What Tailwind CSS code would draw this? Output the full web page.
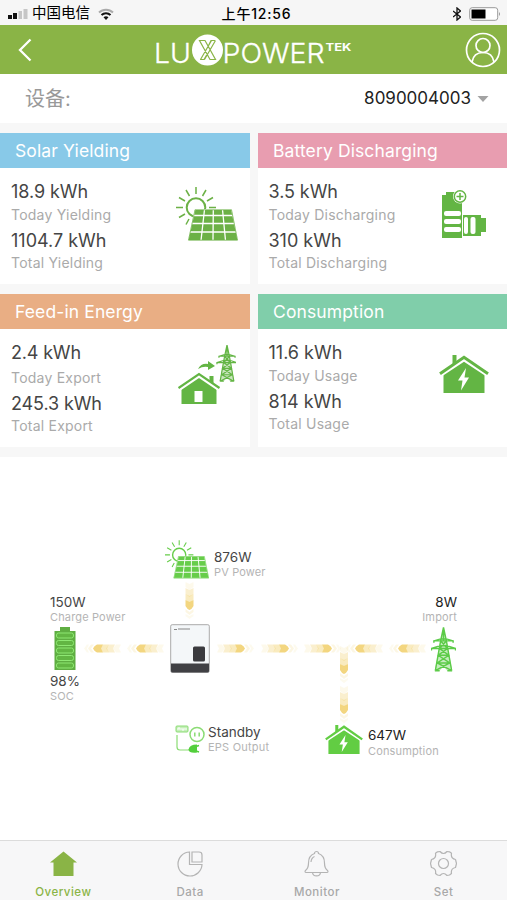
<!DOCTYPE html>
<html lang="zh">
  <head>
    <meta charset="UTF-8" />
    <meta name="viewport" content="width=device-width, initial-scale=1.0" />
    <title>LuxPower — Overview</title>
    <script src="https://cdn.jsdelivr.net/npm/@tailwindcss/browser@4"></script>
  </head>
  <body class="w-[507px] h-[900px] overflow-hidden flex flex-col bg-white font-['Inter','Noto_Sans_CJK_SC',sans-serif] text-[#454545]">
    <!-- Shared icons -->
    <svg class="hidden">
      <symbol id="solar" viewBox="0 0 62 54">
        <g fill="none" stroke="currentColor">
          <circle cx="20" cy="20.5" r="9.3" stroke-width="2" />
          <path stroke-width="1.5" d="M20 0v7M10 3l3.500 6M30 3l-3.500 6M3 10.500l6 3.500M37 10.500l-6 3.500M0 20.500h7M33 20.500h7M3 30.500l6-3.500M10 37.500l3-5.500" />
        </g>
        <path d="M19 22.500h36.500L62 53.500H12z" fill="currentColor" stroke="#fff" stroke-width="1" />
        <path d="M28.500 22.500L25 53.500M37.300 22.500L37 53.500M46.500 22.500L49.500 53.500M18 28.500h39M16 36.500h43M14 45h46" fill="none" stroke="#fff" stroke-width="1.300" />
        <path d="M19 22.800h36.500L61.500 53.200H12.500z" fill="none" stroke="currentColor" stroke-width=".8" />
      </symbol>
      <symbol id="house-bolt" viewBox="0 0 50 38">
        <path d="M4.500 18.500L25 5.500l20.500 13V38h-41z" fill="currentColor" />
        <path d="M1.500 19L25 3.500 48.500 19" fill="none" stroke="#fff" stroke-width="5.500" />
        <path d="M13.500 9V0h4v6.500z" fill="currentColor" />
        <path d="M1 18.800L25 2.200l24 16.600" fill="none" stroke="currentColor" stroke-width="3" />
        <path d="M27 13l-8 12.500h4.500L22 35.500l8-13h-4.500z" fill="#fff" />
      </symbol>
      <symbol id="tower" viewBox="0 0 26 46">
        <path d="M13 0L10 13 4 45h5l4-4 4 4h5L16 13z" fill="currentColor" opacity=".35" />
        <path fill="none" stroke="currentColor" stroke-width="1.500" d="M13 0L10 14 4.500 45M13 0l3 14 5.500 31M3 16v-2h20v2M.5 24v-2h25v2M3 14l7-2h6l7 2M.5 22l9-3h7l9 3M10 14l7 8-9.500 7 12 8L4.500 45M16 14l-7 8 9.500 7-12 8 15 8M7.500 29h11M6 37h14M4 45h5M17 45h5M13 2v12" />
      </symbol>
      <!-- Energy flow dash, pointing right -->
      <symbol id="flow" viewBox="0 0 38 10">
        <g fill="#f2d272">
          <path opacity=".14" d="M0 1h5l3 4-3 4H0l2-4z" />
          <path opacity=".35" d="M6 1h6l3 4-3 4H6l2-4z" />
          <path opacity=".45" d="M12 1h6l3 4-3 4h-6l2-4z" />
          <path opacity=".9" d="M18 1h6q3 1.500 4 4-1 2.500-4 4h-6l2-4z" />
          <path opacity=".2" d="M27 1h3l3 4-3 4h-3l3-4z" />
          <path opacity=".12" d="M32 1h2l3 4-3 4h-2l2-4z" />
        </g>
      </symbol>
    </svg>

    <!-- Status bar -->
    <div class="h-[25px] shrink-0 bg-[#f6f6f6] flex items-center justify-between pt-0.5 pl-2 pr-1.5 text-black">
      <div class="w-[200px] flex items-center">
        <svg class="w-5 h-3" viewBox="0 0 20 12">
          <path d="M0 7h4v4H0zM5 5h4v6H5z" fill="#111" />
          <path d="M10.500 3h3.500v8h-3.500zM15.500 1h4v10h-4z" fill="#c6c6c6" />
        </svg>
        <span class="ml-1 text-[14.500px] leading-none">中国电信</span>
        <svg class="ml-2 w-4 h-3" viewBox="0 0 16 12" fill="none" stroke-width="2">
          <path d="M1 4.500a10 10 0 0 1 14 0" stroke="#aaa" />
          <path d="M3.500 7a6.500 6.500 0 0 1 9 0" stroke="#111" />
          <path d="M5.500 9.200a4 4 0 0 1 5 0L8 12z" fill="#111" />
        </svg>
      </div>
      <span class="pl-1 text-[14px] leading-none font-medium tracking-[0.800px]">上午12:56</span>
      <div class="w-[200px] flex items-center justify-end gap-2">
        <svg class="w-2 h-3.5" viewBox="0 0 8 14" fill="none" stroke="#111" stroke-width="1.300">
          <path d="M0 4l7.500 6L4 13V1l3.500 3L0 10" />
        </svg>
        <svg class="w-8 h-3.5" viewBox="0 0 32 14">
          <rect x=".7" y=".7" width="28" height="12.600" rx="2.500" fill="#fff" stroke="#999" />
          <path d="M2.500 2.500h14v9h-14z" fill="#000" />
          <path d="M30 5q2 2 0 4z" fill="#999" />
        </svg>
      </div>
    </div>

    <!-- Header -->
    <header class="h-[49px] shrink-0 bg-[#8ab446] flex items-center justify-between pl-[18px] pr-[6px] text-white">
      <svg class="w-[24px] h-6" viewBox="0 0 24 24" fill="none" stroke="currentColor" stroke-width="2.300">
        <path d="M12.500 1.500L2 12l10.500 10.500" />
      </svg>
      <svg class="w-[198px] h-9" viewBox="0 0 198 36" fill="currentColor" font-family="Inter">
        <text x="-1" y="30.500" font-size="27.500" font-weight="300" stroke="currentColor" stroke-width=".3" textLength="37" lengthAdjust="spacingAndGlyphs">LU</text>
        <circle cx="52.500" cy="18" r="15.500" />
        <g fill="none" stroke="#8ab446" stroke-width="1.200">
          <path d="M44.500 8.500h5.500l10.500 19h-5.500zM60 8.500h-4l-3 6M45 27.500h4l3.500-6M56.500 8.500l-11 19M60.500 8.500L49.500 27.500" />
        </g>
        <text x="67.500" y="30.500" font-size="27.500" font-weight="300" stroke="currentColor" stroke-width=".3" textLength="102" lengthAdjust="spacingAndGlyphs">POWER</text>
        <text x="170.500" y="18.500" font-size="10.500" font-weight="700" textLength="26" lengthAdjust="spacingAndGlyphs">TEK</text>
      </svg>
      <svg class="w-9 h-9" viewBox="0 0 36 36" fill="none" stroke="currentColor" stroke-width="1.700">
        <circle cx="18" cy="18" r="16.500" />
        <circle cx="18" cy="13.500" r="7" />
        <path d="M7 30c1-6 5-9.500 11-9.500S28 24 29 30" />
      </svg>
    </header>

    <!-- Device selector -->
    <div class="h-[49px] shrink-0 flex items-center justify-between pl-[25px] pr-[18px]">
      <span class="text-[20px] leading-none text-[#999]">设备:</span>
      <div class="flex items-center gap-1.5">
        <span class="text-[17px] leading-none text-[#222]">8090004003</span>
        <svg class="w-3 h-2" viewBox="0 0 12 8"><path d="M.5 1h11L6 7z" fill="#a3a3a3" /></svg>
      </div>
    </div>

    <!-- Energy cards -->
    <main class="shrink-0 h-[334px] bg-[#f7f7f7] pt-2.5 grid grid-cols-[250px_249px] grid-rows-[151px_153px] gap-x-2 gap-y-[10px]">
      <section class="bg-white flex flex-col">
        <h2 class="h-[35px] bg-[#88c9e8] pt-0.5 pl-[15px] flex items-center text-[17.500px] text-white tracking-[0.120px]">Solar Yielding</h2>
        <div class="flex justify-between pl-[11px] pr-3 pt-3">
          <div>
            <p class="h-6 leading-6 text-[18px] tracking-[-0.080px]">18.9 kWh</p>
            <p class="mt-px h-5 leading-5 text-[14px] text-[#aaa] tracking-[0.220px]">Today Yielding</p>
            <p class="mt-1 h-6 leading-6 text-[18px]">1104.7 kWh</p>
            <p class="h-5 leading-5 text-[14px] text-[#aaa] tracking-[0.220px]">Total Yielding</p>
          </div>
          <svg class="mt-[7px] w-[62px] h-[54px] text-[#6cb146]"><use href="#solar" /></svg>
        </div>
      </section>

      <section class="bg-white flex flex-col">
        <h2 class="h-[35px] bg-[#e89db0] pt-0.5 pl-[15px] flex items-center text-[17.500px] text-white tracking-[0.120px]">Battery Discharging</h2>
        <div class="flex justify-between pl-[10.500px] pr-5 pt-3">
          <div>
            <p class="h-6 leading-6 text-[18px] tracking-[-0.080px]">3.5 kWh</p>
            <p class="mt-px h-5 leading-5 text-[14px] text-[#aaa] tracking-[0.220px]">Today Discharging</p>
            <p class="mt-1 h-6 leading-6 text-[18px]">310 kWh</p>
            <p class="h-5 leading-5 text-[14px] text-[#aaa] tracking-[0.220px]">Total Discharging</p>
          </div>
          <svg class="mt-[9px] w-[46px] h-[50px]" viewBox="0 -2 46 50">
            <path d="M1 4h4V1h11v3h5v43H1z" fill="#63b544" />
            <path d="M22 24h18v3h5v14h-5v4H22z" fill="#63b544" />
            <path d="M21.500 24v22" stroke="#fff" stroke-width=".8" />
            <circle cx="19" cy="5.500" r="7" fill="#fff" />
            <circle cx="19" cy="5.500" r="5.700" fill="#fff" stroke="#63b544" stroke-width="1.500" />
            <path d="M19 2v7M15.500 5.500h7" stroke="#63b544" stroke-width="1.500" />
            <g fill="#fff">
              <rect x="3" y="20" width="17" height="5" rx="2" />
              <rect x="3" y="28" width="17" height="5" rx="2" />
              <rect x="3" y="36" width="17" height="5" rx="2" />
              <rect x="23" y="26" width="4" height="17" rx="2" />
              <rect x="29.500" y="26" width="5" height="17" rx="2" />
            </g>
          </svg>
        </div>
      </section>

      <section class="bg-white flex flex-col">
        <h2 class="h-[35px] bg-[#e9ae84] pt-0.5 pl-[15px] flex items-center text-[17.500px] text-white tracking-[0.120px]">Feed-in Energy</h2>
        <div class="flex justify-between pl-[11px] pr-[14px] pt-3">
          <div>
            <p class="h-6 leading-6 text-[18px] tracking-[-0.180px]">2.4 kWh</p>
            <p class="mt-[3px] h-5 leading-5 text-[14px] text-[#aaa] tracking-[0.220px]">Today Export</p>
            <p class="mt-1 h-6 leading-6 text-[18px] tracking-[-0.120px]">245.3 kWh</p>
            <p class="h-5 leading-5 text-[14px] text-[#aaa] tracking-[0.220px]">Total Export</p>
          </div>
          <svg class="mt-1 w-[58px] h-[60px] text-[#63b544]" viewBox="0 0 58 60">
            <use href="#tower" x="38" y="0" width="22" height="37" />
            <path d="M20 24q3-6 10-5v-3l7 5-7 4v-3q-5-1-10 2z" fill="currentColor" />
            <path d="M3.500 44L21 31.500 38.500 44v15h-35z" fill="currentColor" />
            <path d="M1 44L21 30.500 41 44" fill="none" stroke="#fff" stroke-width="4" />
            <path d="M31.500 31h4v8l-4-3z" fill="currentColor" />
            <path d="M.5 43L21 29l20.500 14" fill="none" stroke="currentColor" stroke-width="2.200" />
            <path d="M16.500 46h8v11h-8z" fill="#fff" />
          </svg>
        </div>
      </section>

      <section class="bg-white flex flex-col">
        <h2 class="h-[35px] bg-[#80ceaa] pt-0.5 pl-[15px] flex items-center text-[17.500px] text-white tracking-[0.120px]">Consumption</h2>
        <div class="flex justify-between pl-[10.500px] pr-[18px] pt-3">
          <div>
            <p class="h-6 leading-6 text-[18px]">11.6 kWh</p>
            <p class="mt-px h-5 leading-5 text-[14px] text-[#aaa] tracking-[0.220px]">Today Usage</p>
            <p class="mt-1 h-6 leading-6 text-[18px]">814 kWh</p>
            <p class="h-5 leading-5 text-[14px] text-[#aaa] tracking-[0.220px]">Total Usage</p>
          </div>
          <svg class="mt-[14px] w-[50px] h-[38px] text-[#63b544]"><use href="#house-bolt" /></svg>
        </div>
      </section>
    </main>

    <!-- Energy flow diagram -->
    <div class="relative h-[383px] shrink-0">
      <!-- Flow lines -->
      <svg class="absolute inset-0 w-[507px] h-[383px]" viewBox="0 457 507 383">
        <use href="#flow" width="38" height="10" transform="translate(121 653.500) rotate(180)" />
        <use href="#flow" width="38" height="10" transform="translate(164 653.500) rotate(180)" />
        <use href="#flow" width="38" height="10" transform="translate(217 643.500)" />
        <use href="#flow" width="38" height="10" transform="translate(261 643.500)" />
        <use href="#flow" width="38" height="10" transform="translate(304 643.500)" />
        <use href="#flow" width="38" height="10" transform="translate(383 653.500) rotate(180)" />
        <use href="#flow" width="38" height="10" transform="translate(426 653.500) rotate(180)" />
        <use href="#flow" width="38" height="10" transform="translate(194.500 582) rotate(90)" />
        <use href="#flow" width="38" height="10" transform="translate(349 646) rotate(90)" />
        <use href="#flow" width="38" height="10" transform="translate(349 686) rotate(90)" />
      </svg>

      <!-- PV -->
      <svg class="absolute left-[165px] top-[83px] w-[44px] h-[39px] text-[#67cd4a]"><use href="#solar" /></svg>
      <div class="absolute left-[214px] top-[93px] whitespace-nowrap">
        <p class="text-[13.500px] leading-[15px]">876W</p>
        <p class="text-[11px] leading-[15px] text-[#b4b4b4] tracking-[0.150px]">PV Power</p>
      </div>

      <!-- Battery -->
      <div class="absolute left-[50px] top-[138px] whitespace-nowrap">
        <p class="text-[13.500px] leading-[15px]">150W</p>
        <p class="text-[11px] leading-[15px] text-[#b4b4b4] tracking-[0.150px]">Charge Power</p>
        <svg class="mt-[2px] ml-1 w-[22px] h-[43px]" viewBox="0 0 22 43">
          <path d="M6 0h10v4h5.500v39H.5V4H6z" fill="#5fae42" />
          <g fill="#62b643" stroke="#8ee873" stroke-width="1">
            <rect x="2.500" y="6" width="17" height="5" rx="2" />
            <rect x="2.500" y="13.500" width="17" height="5" rx="2" />
            <rect x="2.500" y="21" width="17" height="5" rx="2" />
            <rect x="2.500" y="28.500" width="17" height="5" rx="2" />
            <rect x="2.500" y="36" width="17" height="5" rx="2" />
          </g>
        </svg>
        <p class="mt-[4px] text-[13.500px] leading-[15px]">98%</p>
        <p class="text-[11px] leading-[15px] text-[#b4b4b4] tracking-[0.150px]">SOC</p>
      </div>

      <!-- Inverter -->
      <svg class="absolute left-[170px] top-[167px] w-[40px] h-[49px]" viewBox="0 0 40 49">
        <rect x=".7" y=".7" width="38.600" height="47.600" rx="1.500" fill="#f4f7f9" stroke="#aaa" />
        <path d="M1 39.500h38V47q0 1.500-1.500 1.500h-35Q1 48.500 1 47z" fill="#404044" />
        <rect x="23" y="22.500" width="12" height="15" rx="1.500" fill="#3b3b3f" />
        <path d="M4 5.500h3M8 5h12" stroke="#888" stroke-width="1.200" />
      </svg>

      <!-- Grid -->
      <div class="absolute right-[50px] top-[138px] whitespace-nowrap text-right">
        <p class="text-[13.500px] leading-[15px] text-[#222]">8W</p>
        <p class="text-[11px] leading-[15px] text-[#b4b4b4] tracking-[0.150px]">Import</p>
      </div>
      <svg class="absolute left-[431px] top-[170px] w-[25px] h-[45px] text-[#5ccb48]"><use href="#tower" /></svg>

      <!-- EPS -->
      <svg class="absolute left-[175px] top-[268px] w-[31px] h-[29px]" viewBox="0 0 31 29" fill="none" stroke="#8bdc74">
        <rect x="1" y="1" width="12" height="6" rx="1" fill="#c5efb9" />
        <path d="M3 5V3h2v2M7 3v2h2V3M11 3v2" stroke="#fff" />
        <path d="M2 10v12q0 3 3 3h9" stroke-width="1.200" />
        <circle cx="22" cy="9.500" r="7" stroke-width="1.500" />
        <path d="M19.800 7.500v4M24.200 7.500v4" stroke-width="1.500" />
        <path d="M22 19.500v8q-8 1-8.500-3 1-5 8.500-5z" fill="#53cf3c" stroke="none" />
        <path d="M21 21.500l3-1M21 26l3 1" stroke="#53cf3c" stroke-width="1.500" />
      </svg>
      <div class="absolute left-[208px] top-[268px] whitespace-nowrap">
        <p class="text-[13.500px] leading-[15px]">Standby</p>
        <p class="text-[11px] leading-[15px] text-[#b4b4b4] tracking-[0.220px]">EPS Output</p>
      </div>

      <!-- Consumption -->
      <svg class="absolute left-[325px] top-[268px] w-[38px] h-[29px] text-[#62cd43]"><use href="#house-bolt" /></svg>
      <div class="absolute left-[368px] top-[271px] whitespace-nowrap">
        <p class="text-[13.500px] leading-[15px] text-[#222]">647W</p>
        <p class="text-[11px] leading-4 text-[#b4b4b4] tracking-[0.150px]">Consumption</p>
      </div>
    </div>

    <!-- Bottom navigation -->
    <nav class="h-[60px] shrink-0 bg-[#f7f7f8] border-t border-[#dcdcdc] grid grid-cols-4 text-[11.500px] font-medium text-[#a8a8a8] tracking-[0.500px]">
      <a href="#" class="flex flex-col items-center pt-[9px] text-[#8ab446]">
        <svg class="w-[27px] h-[27px]" viewBox="0 0 27 27" fill="currentColor">
          <path d="M13.500 1.500L27 12.500h-3.500V26h-20V12.500H0z" />
        </svg>
        <span class="mt-[7px] leading-4">Overview</span>
      </a>
      <a href="#" class="flex flex-col items-center pt-[9px]">
        <svg class="w-[27px] h-[27px]" viewBox="0 0 27 27" fill="none" stroke="#b4b4b4" stroke-width="1.200">
          <path d="M12.500 2a12 12 0 1 0 12.500 12.500H12.500z" />
          <path d="M15 2v10H25V5q0-3-3-3z" />
        </svg>
        <span class="mt-[7px] leading-4">Data</span>
      </a>
      <a href="#" class="flex flex-col items-center pt-[9px]">
        <svg class="w-[27px] h-[27px]" viewBox="0 0 27 27" fill="none" stroke="#b4b4b4" stroke-width="1.200">
          <path d="M11.500 3.500a2 2 0 0 1 4 0C20 5 21.500 8.500 21.500 13c0 4.500 1 6 3 7.500.8.800.5 2-.5 2H3c-1 0-1.300-1.200-.5-2 2-1.500 3-3 3-7.500 0-4.500 1.500-8 6-9.500z" />
          <path d="M9.500 22.500c.5 4.500 7.500 4.500 8 0M8 12c.2-3 1.200-4.500 3.500-5.500" />
        </svg>
        <span class="mt-[7px] leading-4">Monitor</span>
      </a>
      <a href="#" class="flex flex-col items-center pt-[9px]">
        <svg class="w-[27px] h-[27px]" viewBox="0 0 27 27" fill="none" stroke="#b4b4b4" stroke-width="1.200" stroke-linejoin="round">
          <path d="M7.500 1.800L10 1.500Q13.500 5.500 17 1.500l2.500.3 2 1.500Q20.500 8.500 25.500 9.500l1 4-1 4Q20.500 18.500 21.500 23.500l-2 1.500-2.500.5Q13.500 21.500 10 25.500L7.500 25l-2-1.500Q6.500 18.500 1.500 17.500l-1-4 1-4Q6.500 8.500 5.500 3.300z" />
          <circle cx="13.500" cy="13.500" r="5" />
        </svg>
        <span class="mt-[7px] leading-4">Set</span>
      </a>
    </nav>
  </body>
</html>
